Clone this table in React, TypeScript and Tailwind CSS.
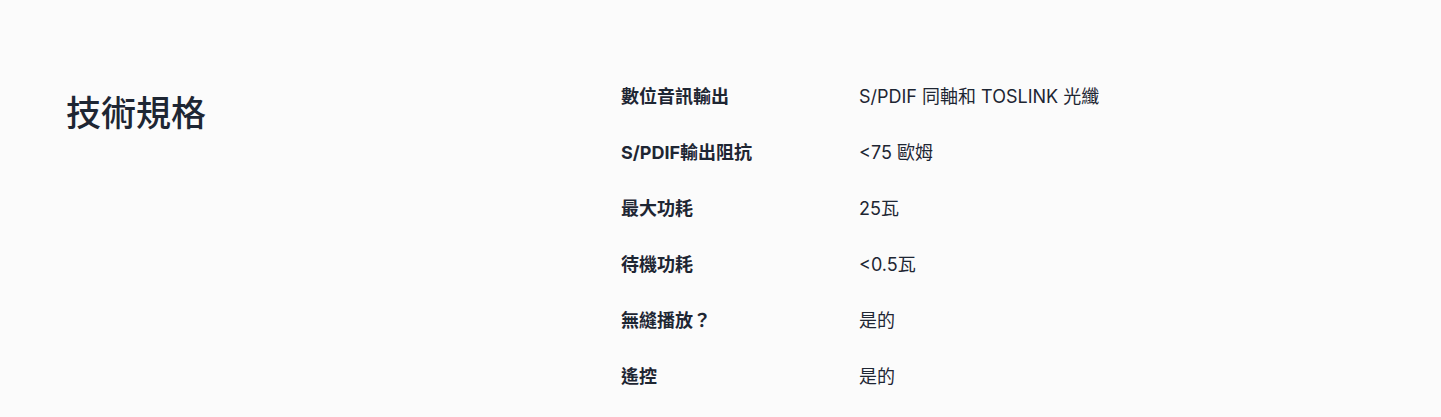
const specs: [string, string][] = [
  ['數位音訊輸出', 'S/PDIF 同軸和 TOSLINK 光纖'],
  ['S/PDIF輸出阻抗', '<75 歐姆'],
  ['最大功耗', '25瓦'],
  ['待機功耗', '<0.5瓦'],
  ['無縫播放？', '是的'],
  ['遙控', '是的'],
]

export default function App() {
  return (
    <div
      className="min-h-[417px] bg-[#fbfbfb] text-[#1e2633]"
      style={{ fontFamily: 'Inter, "Noto Sans CJK TC", sans-serif' }}
    >
      <div className="flex pl-[66px] pt-[69px]">
        {/* Section title */}
        <div className="w-[555px] shrink-0 pt-[24px]">
          <h2 className="text-[35px] leading-[40px] font-medium">技術規格</h2>
        </div>

        {/* Spec table */}
        <div className="grid grid-cols-[238px_1fr] w-[560px]">
          {specs.map(([label, value]) => (
            <div key={label} className="contents">
              <div className="py-4 text-[18px] leading-6 font-bold">{label}</div>
              <div className="py-4 text-[18px] leading-6">{value}</div>
            </div>
          ))}
        </div>
      </div>
    </div>
  )
}
